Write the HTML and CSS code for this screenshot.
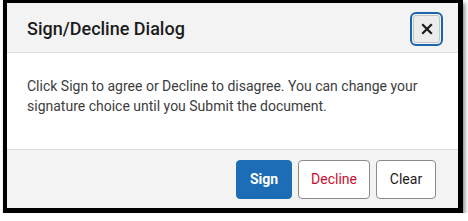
FILE: index.html
```html
<!DOCTYPE html>
<html>
<head>
<meta charset="utf-8">
<link rel="stylesheet" href="styles.css">
</head>
<body>
<div class="dialog">
  <div class="header">
    <h1 class="title">Sign/Decline Dialog</h1>
    <button class="close" aria-label="Close">
      <svg width="12" height="12" viewBox="0 0 12 12"><path d="M2 2 L10 10 M10 2 L2 10" stroke="#1a1a1a" stroke-width="2.2" stroke-linecap="square"/></svg>
    </button>
  </div>
  <div class="content">
    <p class="message">Click Sign to agree or Decline to disagree. You can change your signature choice until you Submit the document.</p>
  </div>
  <div class="footer">
    <button class="btn btn-primary">Sign</button>
    <button class="btn btn-decline">Decline</button>
    <button class="btn btn-clear">Clear</button>
  </div>
</div>
</body>
</html>
```

FILE: styles.css
```css
html, body {
  margin: 0;
  padding: 0;
  background: #ffffff;
}
body {
  font-family: Roboto, "Liberation Sans", sans-serif;
  padding: 0 0 0 3px;
}
.dialog {
  width: 451px;
  height: 205px;
  border-style: solid;
  border-color: #000;
  border-width: 3px 5px 5px 4px;
  background: #fff;
  display: flex;
  flex-direction: column;
  box-shadow: 2px 3px 4px rgba(0,0,0,0.45);
}
.header {
  box-sizing: border-box;
  height: 50px;
  background: #f3f3f3;
  border-bottom: 1px solid #dedede;
  display: flex;
  align-items: center;
  justify-content: space-between;
  padding: 2px 15px 0 20px;
}
.title {
  margin: 0;
  font-size: 18px;
  font-weight: 500;
  color: #1c1c1c;
}
.close {
  width: 27px;
  height: 28px;
  padding: 0;
  margin-right: 3px;
  border: 1px solid #c4c4c4;
  border-radius: 3px;
  background: #ececec;
  outline: 2px solid #1a64b0;
  outline-offset: 1px;
  display: flex;
  align-items: center;
  justify-content: center;
}
.content {
  flex: 1;
  padding: 0 20px;
  border-bottom: 1px solid #dedede;
}
.message {
  margin: 23px 0 0;
  font-size: 14px;
  line-height: 20px;
  color: #3d3d3d;
}
.footer {
  height: 58px;
  background: #f3f3f3;
  display: flex;
  align-items: center;
  justify-content: flex-end;
  gap: 6px;
  padding-right: 22px;
}
.btn {
  height: 39px;
  border-radius: 4px;
  font-family: Roboto, "Liberation Sans", sans-serif;
  font-size: 14px;
  padding: 0;
}
.btn-primary {
  width: 56px;
  background: #1c6db6;
  border: 1px solid #1c6db6;
  color: #fff;
  font-weight: 700;
}
.btn-decline {
  width: 72px;
  background: #fff;
  border: 1px solid #8a8a8a;
  color: #c8102e;
}
.btn-clear {
  width: 60px;
  background: #fff;
  border: 1px solid #8a8a8a;
  color: #1c1c1c;
}
```
